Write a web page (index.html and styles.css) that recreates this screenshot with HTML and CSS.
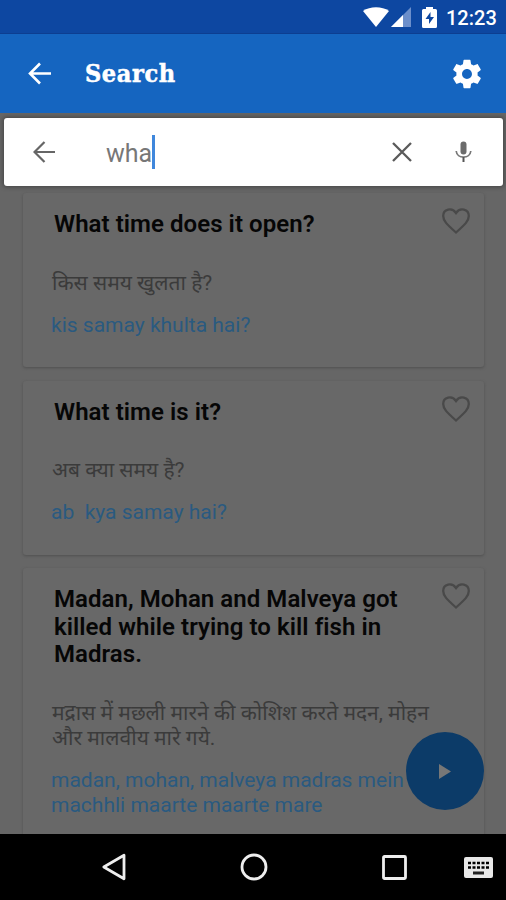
FILE: index.html
```html
<!DOCTYPE html>
<html lang="en">
<head>
<meta charset="utf-8">
<title>Search</title>
<link rel="stylesheet" href="styles.css">
</head>
<body>
<div class="screen">
  <div class="status">
    <svg class="wifi" width="26" height="20" viewBox="0 0 26 20"><path d="M0 4C7-1 19-1 26 4L13 20Z" fill="#fff"/></svg>
    <svg class="signal" width="20" height="20" viewBox="0 0 20 20"><path d="M0 20L20 0V20Z" fill="#6c8fcb"/><path d="M0 20L12 8V20Z" fill="#fff"/></svg>
    <svg class="battery" width="15" height="21" viewBox="0 0 15 21"><path d="M4 2V0h7v2h2.500Q15 2 15 3.500v16Q15 21 13.500 21h-12Q0 21 0 19.500v-16Q0 2 1.500 2Z" fill="#fff"/><path d="M8.500 5L3.500 12H7v5l5-7H8.500Z" fill="#0d47a1"/></svg>
    <span class="clock">12:23</span>
  </div>
  <header class="appbar">
    <svg class="back" width="23" height="23" viewBox="0 0 23 23"><path d="M23 11.500H2M12 1.500L2 11.500l10 10" fill="none" stroke="#fff" stroke-width="2.600"/></svg>
    <h1>Search</h1>
    <svg class="gear" width="34" height="34" viewBox="0 0 24 24"><path fill="#fff" d="M19.430 12.980c.04-.32.07-.64.07-.98s-.03-.66-.07-.98l2.110-1.650c.19-.15.24-.42.12-.64l-2-3.460c-.12-.22-.39-.3-.61-.22l-2.490 1c-.52-.4-1.080-.73-1.690-.98l-.38-2.650C14.460 2.180 14.250 2 14 2h-4c-.25 0-.46.18-.49.42l-.38 2.650c-.61.25-1.170.59-1.690.98l-2.490-1c-.23-.09-.49 0-.61.22l-2 3.460c-.13.22-.07.49.12.64l2.110 1.650c-.04.32-.07.65-.07.98s.03.66.07.98l-2.110 1.650c-.19.15-.24.42-.12.64l2 3.460c.12.22.39.3.61.22l2.490-1c.52.4 1.080.73 1.690.98l.38 2.650c.03.24.24.42.49.42h4c.25 0 .46-.18.49-.42l.38-2.650c.61-.25 1.170-.59 1.690-.98l2.490 1c.23.09.49 0 .61-.22l2-3.460c.12-.22.07-.49-.12-.64l-2.110-1.650zM12 15.500c-1.930 0-3.500-1.570-3.500-3.500s1.570-3.500 3.500-3.500 3.500 1.570 3.500 3.500-1.570 3.500-3.500 3.500z"/></svg>
  </header>
  <main class="content">
    <div class="searchbar">
      <svg class="sback" width="22" height="22" viewBox="0 0 22 22"><path d="M22 11H1.500M11.500 1l-10 10 10 10" fill="none" stroke="#666" stroke-width="2.200"/></svg>
      <span class="query">wha</span><span class="caret"></span>
      <svg class="clear" width="20" height="20" viewBox="0 0 20 20"><path d="M1 1l18 18M19 1L1 19" stroke="#5a5a5a" stroke-width="2.300"/></svg>
      <svg class="mic" width="17" height="22" viewBox="0 0 17 22"><rect x="5.500" y="0.500" width="6" height="13" rx="3" fill="#6c6c6c"/><path d="M1.200 10C1.800 18 15.200 18 15.800 10" fill="none" stroke="#777" stroke-width="1.700"/><path d="M8.500 16v5" stroke="#555" stroke-width="2"/></svg>
    </div>
    <article class="card">
      <h2>What time does it open?</h2>
      <p class="hindi" lang="hi">किस समय खुलता है?</p>
      <p class="latin">kis samay khulta hai?</p>
      <svg class="heart" width="28" height="26" viewBox="0 0 28 26"><path d="M14 24.500C5 16.500 1.200 13 1.200 8C1.200 1 10 -1 14 5C18-1 26.800 1 26.800 8C26.800 13 23 16.500 14 24.500Z"/></svg>
    </article>
    <article class="card">
      <h2>What time is it?</h2>
      <p class="hindi" lang="hi">अब क्या समय है?</p>
      <p class="latin">ab  kya samay hai?</p>
      <svg class="heart" width="28" height="26" viewBox="0 0 28 26"><path d="M14 24.500C5 16.500 1.200 13 1.200 8C1.200 1 10 -1 14 5C18-1 26.800 1 26.800 8C26.800 13 23 16.500 14 24.500Z"/></svg>
    </article>
    <article class="card last">
      <h2>Madan, Mohan and Malveya got<br>killed while trying to kill fish in<br>Madras.</h2>
      <p class="hindi" lang="hi">मद्रास में मछली मारने की कोशिश करते मदन, मोहन<br>और मालवीय मारे गये.</p>
      <p class="latin">madan, mohan, malveya madras mein<br>machhli maarte maarte mare</p>
      <svg class="heart" width="28" height="26" viewBox="0 0 28 26"><path d="M14 24.500C5 16.500 1.200 13 1.200 8C1.200 1 10 -1 14 5C18-1 26.800 1 26.800 8C26.800 13 23 16.500 14 24.500Z"/></svg>
    </article>
    <div class="fab"><svg width="12" height="15" viewBox="0 0 12 15"><path d="M0 0L12 7.500L0 15Z" fill="#777"/></svg></div>
  </main>
  <nav class="navbar">
    <svg width="25" height="28" viewBox="0 0 25 28"><path d="M23 2.200V25.800L2.800 14Z" fill="none" stroke="#eee" stroke-width="2.800" stroke-linejoin="round"/></svg>
    <svg class="home" width="28" height="28" viewBox="0 0 28 28"><circle cx="14" cy="14" r="12" fill="none" stroke="#eee" stroke-width="2.800"/></svg>
    <svg class="recent" width="25" height="25" viewBox="0 0 25 25"><rect x="1.500" y="1.500" width="22" height="22" rx="1" fill="none" stroke="#eee" stroke-width="2.800"/></svg>
    <svg class="keyboard" width="29" height="21" viewBox="0 0 29 21"><rect width="29" height="21" rx="2" fill="#e8e8e8"/><path d="M4 6H25M4 10.500H25" stroke="#000" stroke-width="2.700" stroke-dasharray="3 1.500"/><path d="M9 16h11" stroke="#222" stroke-width="3"/></svg>
  </nav>
</div>
</body>
</html>
```

FILE: styles.css
```css
* { box-sizing: border-box; }
body { margin: 0; font-family: Roboto, "Noto Sans", sans-serif; }
h1, h2, p { margin: 0; font-weight: 400; }
svg { display: block; flex: none; }
.screen { width: 506px; height: 900px; display: flex; flex-direction: column; overflow: hidden; }
.status { height: 34px; flex: none; background: #0d47a1; border-bottom: 1px solid #0c3e91; display: flex; align-items: flex-start; padding: 7px 10px 0 0; justify-content: flex-end; color: #fff; }
.wifi { margin-right: 2px; }
.signal { margin-right: 11px; }
.battery { margin-right: 9px; }
.clock { font-size: 20px; line-height: 23px; font-weight: 500; width: 50px; white-space: nowrap; }
.appbar { height: 79px; flex: none; background: #1565c0; display: flex; align-items: center; padding: 0 22px 0 28px; color: #fff; }
.appbar h1 { font-family: "DejaVu Serif Condensed", "DejaVu Serif", serif; font-stretch: condensed; font-weight: 700; font-size: 25px; letter-spacing: 0.600px; line-height: 30px; margin-left: 34px; -webkit-text-stroke: 0.500px #fff; }
.gear { margin-left: auto; }
.content { height: 721px; flex: none; position: relative; overflow: hidden; background: #666; padding-top: 5px; }
.searchbar { height: 68px; margin: 0 3px 7px 4px; background: #fff; border-radius: 3px; box-shadow: 0 0 4px 1px #444; display: flex; align-items: center; padding: 0 31px 0 29px; }
.query { font-size: 25px; line-height: 30px; color: #777; margin-left: 51px; padding-top: 3px; }
.caret { width: 2.500px; height: 34px; background: #3f87dc; }
.clear { margin-left: auto; }
.mic { margin-left: 43px; }
.card { position: relative; height: 174px; margin: 0 22px 13.500px 23px; padding: 18px 20px 0 31px; background: #686868; border-radius: 3px; box-shadow: 0 1px 3px #505050; }
.card.last { height: 300px; }
.card h2 { font-size: 24px; line-height: 27.700px; font-weight: 600; letter-spacing: 0.060px; color: #060606; white-space: nowrap; }
.hindi { margin: 32px 0 0 -2px; font-size: 21px; line-height: 25px; color: #3b3b3b; white-space: nowrap; }
.latin { margin: 17px 0 0 -3px; font-size: 21px; line-height: 25px; color: #2a5a80; white-space: pre; }
.heart { position: absolute; right: 14px; top: 15px; }
.heart path { fill: none; stroke: #494949; stroke-width: 2.300; }
.fab { position: absolute; left: 406px; top: 619px; width: 78px; height: 78px; border-radius: 50%; background: #0c3b68; display: flex; align-items: center; justify-content: center; }
.navbar { height: 66px; flex: none; background: #000; display: flex; align-items: center; padding: 0 13px 0 101px; }
.home { margin-left: 114px; }
.recent { margin-left: 114px; }
.keyboard { margin-left: auto; }
```
